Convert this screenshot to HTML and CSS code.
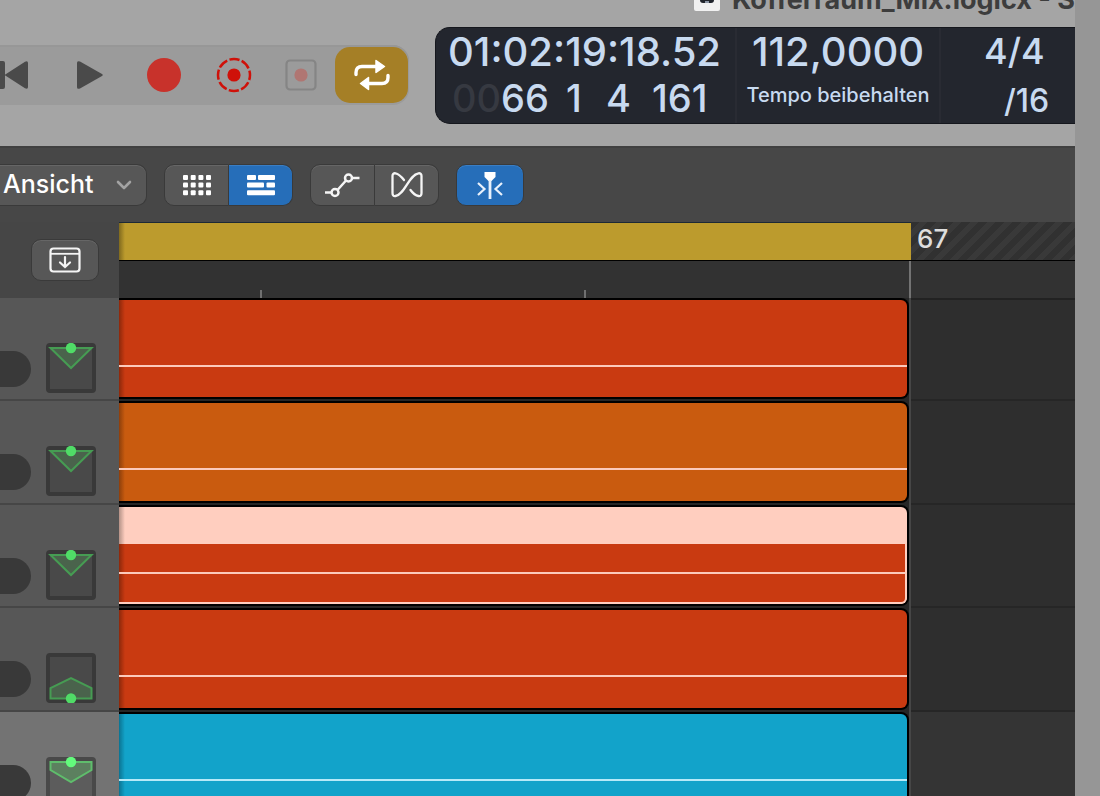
FILE: index.html
```html
<!DOCTYPE html>
<html lang="de">
<head>
<meta charset="utf-8">
<title>Kofferraum_Mix.logicx</title>
<link rel="stylesheet" href="styles.css">
</head>
<body>
<main class="app">
  <header class="titlebar">
    <svg class="doc-icon" viewBox="0 0 26 26" width="26" height="26" aria-hidden="true">
      <rect width="26" height="26" rx="2" fill="#f1f1f1"/>
      <rect x="6" y="12" width="14" height="6" rx="3" fill="#20242c"/>
      <rect x="11" y="16" width="4" height="2" fill="#8c96a6"/>
    </svg>
    <h1 class="title">Kofferraum_Mix.logicx - S</h1>
  </header>

  <section class="control-bar">
    <div class="transport">
      <button class="tbtn rewind" aria-label="Zum Anfang">
        <svg width="28" height="28" viewBox="0 0 28 28"><path d="M0 0H3Q5 0 5 2V26Q5 28 3 28H0ZM4.500 14 L25 .8Q28-.5 28 2V26Q28 28.500 25 27.200Z" fill="#4a4a4a"/></svg>
      </button>
      <button class="tbtn play" aria-label="Wiedergabe">
        <svg width="26" height="28" viewBox="0 0 26 28"><path d="M0 2Q0-.8 3 .6L25 13Q26.500 14 25 15L3 27.400Q0 28.800 0 26Z" fill="#4a4a4a"/></svg>
      </button>
      <button class="tbtn record" aria-label="Aufnahme">
        <svg width="34" height="34" viewBox="0 0 34 34"><circle cx="17" cy="17" r="17" fill="#c8322b"/></svg>
      </button>
      <button class="tbtn capture" aria-label="Als Aufnahme sichern">
        <svg width="36" height="36" viewBox="0 0 36 36"><circle cx="18" cy="18" r="16" fill="none" stroke="#cf1109" stroke-width="2.500" stroke-dasharray="10.200 2.366" stroke-dashoffset="5.100"/><circle cx="18" cy="18" r="6.600" fill="#cf1109"/></svg>
      </button>
      <button class="tbtn arm" aria-label="Aufnahme ersetzen">
        <svg width="32" height="32" viewBox="0 0 32 32"><rect x="1.500" y="1.500" width="29" height="29" rx="3.500" fill="none" stroke="#858585" stroke-width="2.200"/><circle cx="16" cy="16" r="6.600" fill="#b07672"/></svg>
      </button>
      <button class="tbtn cycle" aria-label="Cycle">
        <svg width="40" height="34" viewBox="0 0 40 34" fill="none" stroke="#fff" stroke-width="3.400" stroke-linecap="round"><path d="M4 16.500V14.500Q4 8.500 10 8.500H24"/><path d="M24 2.500V14.500L32.500 8.500Z" fill="#fff" stroke-width="1.500" stroke-linejoin="round"/><path d="M36 17.500V19.500Q36 25.500 30 25.500H17"/><path d="M16.500 19.500V31.500L8.500 25.500Z" fill="#fff" stroke-width="1.500" stroke-linejoin="round"/></svg>
      </button>
    </div>
    <div class="lcd">
      <div class="lcd-cell position">
        <div class="big">01:02:19:18.52</div>
        <div class="bars"><span><span class="dim">00</span>66</span><span>1</span><span>4</span><span>161</span></div>
      </div>
      <div class="lcd-cell tempo">
        <div class="big">112,0000</div>
        <div class="mode">Tempo beibehalten</div>
      </div>
      <div class="lcd-cell signature">
        <div class="big meter">4/4</div>
        <div class="division">/16</div>
      </div>
    </div>
  </section>

  <nav class="toolbar">
    <div class="menu">
      <select class="menu-select" aria-label="Ansicht"><option>Ansicht</option></select>
      <svg class="chevron" width="16" height="10" viewBox="0 0 16 10"><path d="M2 2L8 8L14 2" fill="none" stroke="#a3a3a3" stroke-width="2.600" stroke-linecap="round" stroke-linejoin="round"/></svg>
    </div>
    <div class="segment">
      <button class="seg" aria-label="Live Loops">
        <svg width="30" height="22" viewBox="0 0 30 22" fill="#fff"><g id="r"><rect x="1" y="1" width="5" height="5" rx="1"/><rect x="8.700" y="1" width="5" height="5" rx="1"/><rect x="16.400" y="1" width="5" height="5" rx="1"/><rect x="24" y="1" width="5" height="5" rx="1"/></g><use href="#r" y="7.600"/><use href="#r" y="15.200"/></svg>
      </button>
      <button class="seg active" aria-label="Spuren">
        <svg width="30" height="22" viewBox="0 0 30 22" fill="#fff"><rect x="1" y="1" width="9" height="5" rx="1"/><rect x="12" y="1" width="17" height="5" rx="1"/><rect x="1" y="8.600" width="17" height="5" rx="1"/><rect x="20.500" y="8.600" width="8.500" height="5" rx="1"/><rect x="1" y="16.200" width="28" height="5" rx="1"/></svg>
      </button>
    </div>
    <div class="segment">
      <button class="seg" aria-label="Automation">
        <svg class="auto" width="36" height="26" viewBox="1 0 36 26" fill="none" stroke="#f5f5f5" stroke-width="2.500"><path d="M1 20.500H7.500M13.500 18L22 8.500M27.500 6H35.500"/><circle cx="11" cy="20.500" r="3.500"/><circle cx="24.500" cy="6" r="3.500"/></svg>
      </button>
      <button class="seg" aria-label="Flex">
        <svg width="34" height="28" viewBox="0 0 34 28" fill="none" stroke="#f5f5f5" stroke-width="2.300" stroke-linecap="round" stroke-linejoin="round"><path d="M14 9C10.500 4.500 8.500 2.800 5.500 2.300Q2.500 2 2.500 5V22Q2.500 25.500 5.500 25C15 23.500 19 3.500 28.500 2.300Q31.500 2 31.500 5V22Q31.500 25.500 28.500 25C25.500 24.500 23 22.500 20.500 19"/></svg>
      </button>
    </div>
    <div class="segment">
      <button class="seg solo active" aria-label="Catch">
        <svg width="28" height="28" viewBox="0 0 28 28" fill="none" stroke="#e9f1fb" stroke-width="2.200"><path d="M8.500 1H19.500V6L15.500 10H12.500L8.500 6Z" fill="#fff" stroke="none"/><path d="M14 9V28" stroke-width="2.800"/><path d="M2 12L8.500 18L2 24M26 12L19.500 18L26 24"/></svg>
      </button>
    </div>
  </nav>

  <section class="ruler">
    <div class="ruler-head">
      <button class="seg solo catch" aria-label="Spuren-Import">
        <svg width="32" height="26" viewBox="0 0 32 26" fill="none" stroke="#f5f5f5" stroke-width="2.200"><rect x="1.500" y="1.500" width="29" height="23" rx="3"/><path d="M2 6.800H30" stroke-width="1.800"/><path d="M16 10V20M11 15.500L16 20L21 15.500" stroke-linecap="round"/></svg>
      </button>
    </div>
    <div class="ruler-lanes">
      <div class="cycle-lane"><div class="cycle-range"></div><div class="hatched">67</div></div>
      <div class="bar-lane"><div class="ticks"><i class="tick"></i><i class="tick"></i></div></div>
    </div>
  </section>

  <section class="tracks">
    <div class="track">
      <div class="track-head"><div class="fader"></div><button class="pan" aria-label="Pan 1"><svg viewBox="0 0 50 50"><path d="M4.500 5H45.500L25 25Z"/><circle cx="25" cy="5" r="5.200"/></svg></button></div>
      <div class="lane"><div class="region red"><i class="volume"></i></div></div><div class="after"></div>
    </div>
    <div class="track">
      <div class="track-head"><div class="fader"></div><button class="pan" aria-label="Pan 2"><svg viewBox="0 0 50 50"><path d="M4.500 5H45.500L25 25Z"/><circle cx="25" cy="5" r="5.200"/></svg></button></div>
      <div class="lane"><div class="region orange"><i class="volume"></i></div></div><div class="after"></div>
    </div>
    <div class="track">
      <div class="track-head"><div class="fader"></div><button class="pan" aria-label="Pan 3"><svg viewBox="0 0 50 50"><path d="M4.500 5H45.500L25 25Z"/><circle cx="25" cy="5" r="5.200"/></svg></button></div>
      <div class="lane"><div class="region red picked"><div class="region-body"><i class="volume"></i></div></div></div><div class="after"></div>
    </div>
    <div class="track">
      <div class="track-head"><div class="fader"></div><button class="pan" aria-label="Pan 4"><svg viewBox="0 0 50 50"><path d="M4.500 45.500V35L25 25L45.500 35V45.500Z"/><circle cx="25" cy="45.500" r="5.200"/></svg></button></div>
      <div class="lane"><div class="region red"><i class="volume"></i></div></div><div class="after"></div>
    </div>
    <div class="track current">
      <div class="track-head"><div class="fader"></div><button class="pan" aria-label="Pan 5"><svg viewBox="0 0 50 50"><path d="M4.500 5H45.500V13L25 25L4.500 13Z"/><circle cx="25" cy="5" r="5.200"/></svg></button></div>
      <div class="lane"><div class="region blue"><i class="volume"></i></div></div><div class="after"></div>
    </div>
  </section>
</main>
<aside class="backdrop"></aside>
</body>
</html>
```
FILE: styles.css
```css
* { box-sizing: border-box; }

body {
  margin: 0;
  height: 100vh;
  overflow: hidden;
  display: flex;
  background: #969696;
  font-family: Inter, "Liberation Sans", sans-serif;
}

.app { flex: 1; min-width: 0; overflow: hidden; background: #a5a5a5; }
.backdrop { flex: 0 0 25px; background: #969696; }
button { border: 0; padding: 0; background: none; font: inherit; }
svg { display: block; }

/* Window title */
.titlebar {
  height: 27px;
  display: flex;
  justify-content: flex-end;
  align-items: flex-end;
  overflow: hidden;
}
.doc-icon { flex: none; margin: 0 12px 16px 0; }
.title {
  flex: 0 0 341px;
  margin: 0 0 11px;
  font-size: 27px;
  line-height: 32px;
  font-weight: 700;
  color: #3d3d3d;
  white-space: nowrap;
}

/* Transport and display */
.control-bar { height: 119px; display: flex; align-items: flex-start; }
.transport {
  flex: 0 0 409px;
  height: 60px;
  margin: 18px 26px 0 0;
  display: flex;
  align-items: center;
  background: #9b9b9b;
  box-shadow: inset 0 2px #979797;
  border-radius: 0 16px 16px 0;
}
.play { margin-left: 49px; }
.record { margin-left: 44px; }
.capture { margin-left: 35px; }
.arm { margin-left: 33px; }
.cycle {
  margin-left: 18px;
  width: 73px;
  height: 56px;
  display: grid;
  place-items: center;
  background: #a57f26;
  border-radius: 15px;
}

.lcd {
  flex: 1;
  min-width: 0;
  height: 97px;
  display: grid;
  grid-template-columns: 301px 204px 1fr;
  background: #23262e;
  border: 1px solid #15171d;
  border-right: 0;
  border-radius: 15px 0 0 15px;
  color: #c8daf0;
  overflow: hidden;
}
.lcd-cell { border-right: 2px solid #292b33; white-space: nowrap; }
.lcd-cell:last-child { border: 0; }
.big { font-size: 40px; line-height: 47px; font-weight: 500; }
.position { padding-left: 12px; }
.bars {
  display: grid;
  grid-template-columns: 114px 40px 46px 1fr;
  padding-left: 4px;
  font-size: 38px;
  line-height: 47px;
  font-weight: 500;
}
.dim { color: #363941; }
.tempo { text-align: center; }
.mode { font-size: 20px; line-height: 40px; font-weight: 500; }
.signature { padding-left: 43px; }
.meter { font-size: 36px; }
.division { font-size: 32px; line-height: 52px; font-weight: 500; padding-left: 20px; }

/* Toolbar */
.toolbar {
  height: 76px;
  padding-top: 16px;
  display: flex;
  align-items: flex-start;
  gap: 17px;
  background: #474747;
  border-top: 2px solid #404040;
}
.menu { flex: 0 0 147px; display: grid; align-items: center; }
.menu-select {
  grid-area: 1 / 1;
  appearance: none;
  width: 100%;
  height: 42px;
  margin: 0;
  padding: 0 0 3px 3px;
  border: 1px solid #3a3a3a;
  border-width: 1px 1px 1px 0;
  border-radius: 0 10px 10px 0;
  background: #575757;
  box-shadow: inset 0 1px #666;
  font: 500 25px/36px Inter, sans-serif;
  color: #fff;
}
.chevron { grid-area: 1 / 1; justify-self: end; margin-right: 15px; pointer-events: none; }
.segment { display: flex; height: 42px; border-radius: 10px; }
.seg {
  width: 65px;
  height: 42px;
  display: grid;
  place-items: center;
  background: #575757;
  border: 1px solid #3a3a3a;
  box-shadow: inset 0 1px #666;
}
.seg:first-child { border-radius: 10px 0 0 10px; }
.seg:last-child { width: 64px; border-left: 0; border-radius: 0 10px 10px 0; }
.seg.active { background: #266eb9; box-shadow: inset 0 1px #3a7ec4; }
.seg.solo { width: 68px; border: 1px solid #3a3a3a; border-radius: 10px; }

/* Ruler */
.ruler { display: flex; height: 76px; }
.ruler-head { flex: 0 0 119px; background: #464646; padding: 17px 0 0 31px; }
.ruler-lanes { flex: 1; display: grid; grid-template-rows: 39px 37px; }
.cycle-lane, .bar-lane { display: grid; grid-template-columns: 29fr 6fr; }
.cycle-lane { border-bottom: 1px solid #000; }
.cycle-range {
  background: linear-gradient(90deg, #806a1e, transparent 6px) #bc9b2d;
  border-top: 1px solid #1d2a35;
}
.hatched {
  padding-left: 6px;
  font-size: 26px;
  line-height: 33px;
  font-weight: 500;
  color: #dedede;
  background: repeating-linear-gradient(135deg, #313131 0 6px, #393939 6px 12px);
}
.bar-lane { background: #323232; }
.ticks {
  display: grid;
  grid-template-columns: 143px 324px 1fr;
  align-items: end;
  border-right: 2px solid #737373;
}
.tick { height: 8px; border-right: 2px solid #707070; }

/* Tracks */
.tracks { display: grid; grid-template-rows: 103px 104px 103px 104px 103px; background: #2e2e2e; }
.track { display: grid; grid-template-columns: 119px 29fr 6fr; }
.track-head {
  display: flex;
  align-items: flex-start;
  gap: 15px;
  padding-top: 45px;
  background: #575757;
  border-bottom: 2px solid #464646;
}
.fader { width: 31px; height: 36px; margin-top: 8px; background: #393939; border-radius: 0 18px 18px 0; }
.pan { width: 50px; height: 50px; background: #494949; border: 4px solid #393939; border-radius: 4px; }
.pan svg { width: 50px; height: 50px; margin: -4px; }
.pan path { fill: #4a634c; stroke: #469c53; stroke-width: 2; }
.pan circle { fill: #50dc67; }
.lane {
  padding-bottom: 2px;
  background: #262626;
  border-right: 2px solid #464646;
}
.after { border-bottom: 2px solid #262626; }
.track:first-child .after { border-top: 2px solid #222; }
.region {
  height: 100%;
  padding-top: 65px;
  border: 2px solid #000;
  border-left: 0;
  border-radius: 0 8px 8px 0;
  overflow: hidden;
}
.red { background: linear-gradient(90deg, #8c280b, transparent 6px) #c93a11; }
.orange { background: linear-gradient(90deg, #8d3f0b, transparent 6px) #c95b0f; }
.blue { background: linear-gradient(90deg, #0b7391, transparent 6px) #12a3ca; }
.volume { display: block; height: 2px; background: #fccabb; }
.blue .volume { background: #b5eaf8; }
.picked { padding: 37px 0 0; background: linear-gradient(90deg, #b49287, transparent 6px) #ffcebf; }
.region-body {
  height: 100%;
  padding-top: 28px;
  background: linear-gradient(90deg, #8c280b, transparent 6px) #c93a11;
  border: 2px solid #ffcebf;
  border-width: 0 2px 2px 0;
  border-radius: 0 0 6px 0;
}
.current { background: #343434; }
.current .track-head { background: #737373; }
.current .pan { background: #5c5c5c; border-color: #494949; }
.current .pan path { fill: #5c805f; stroke: #5fbd6c; }
.current .pan circle { fill: #63fb7c; }
```
